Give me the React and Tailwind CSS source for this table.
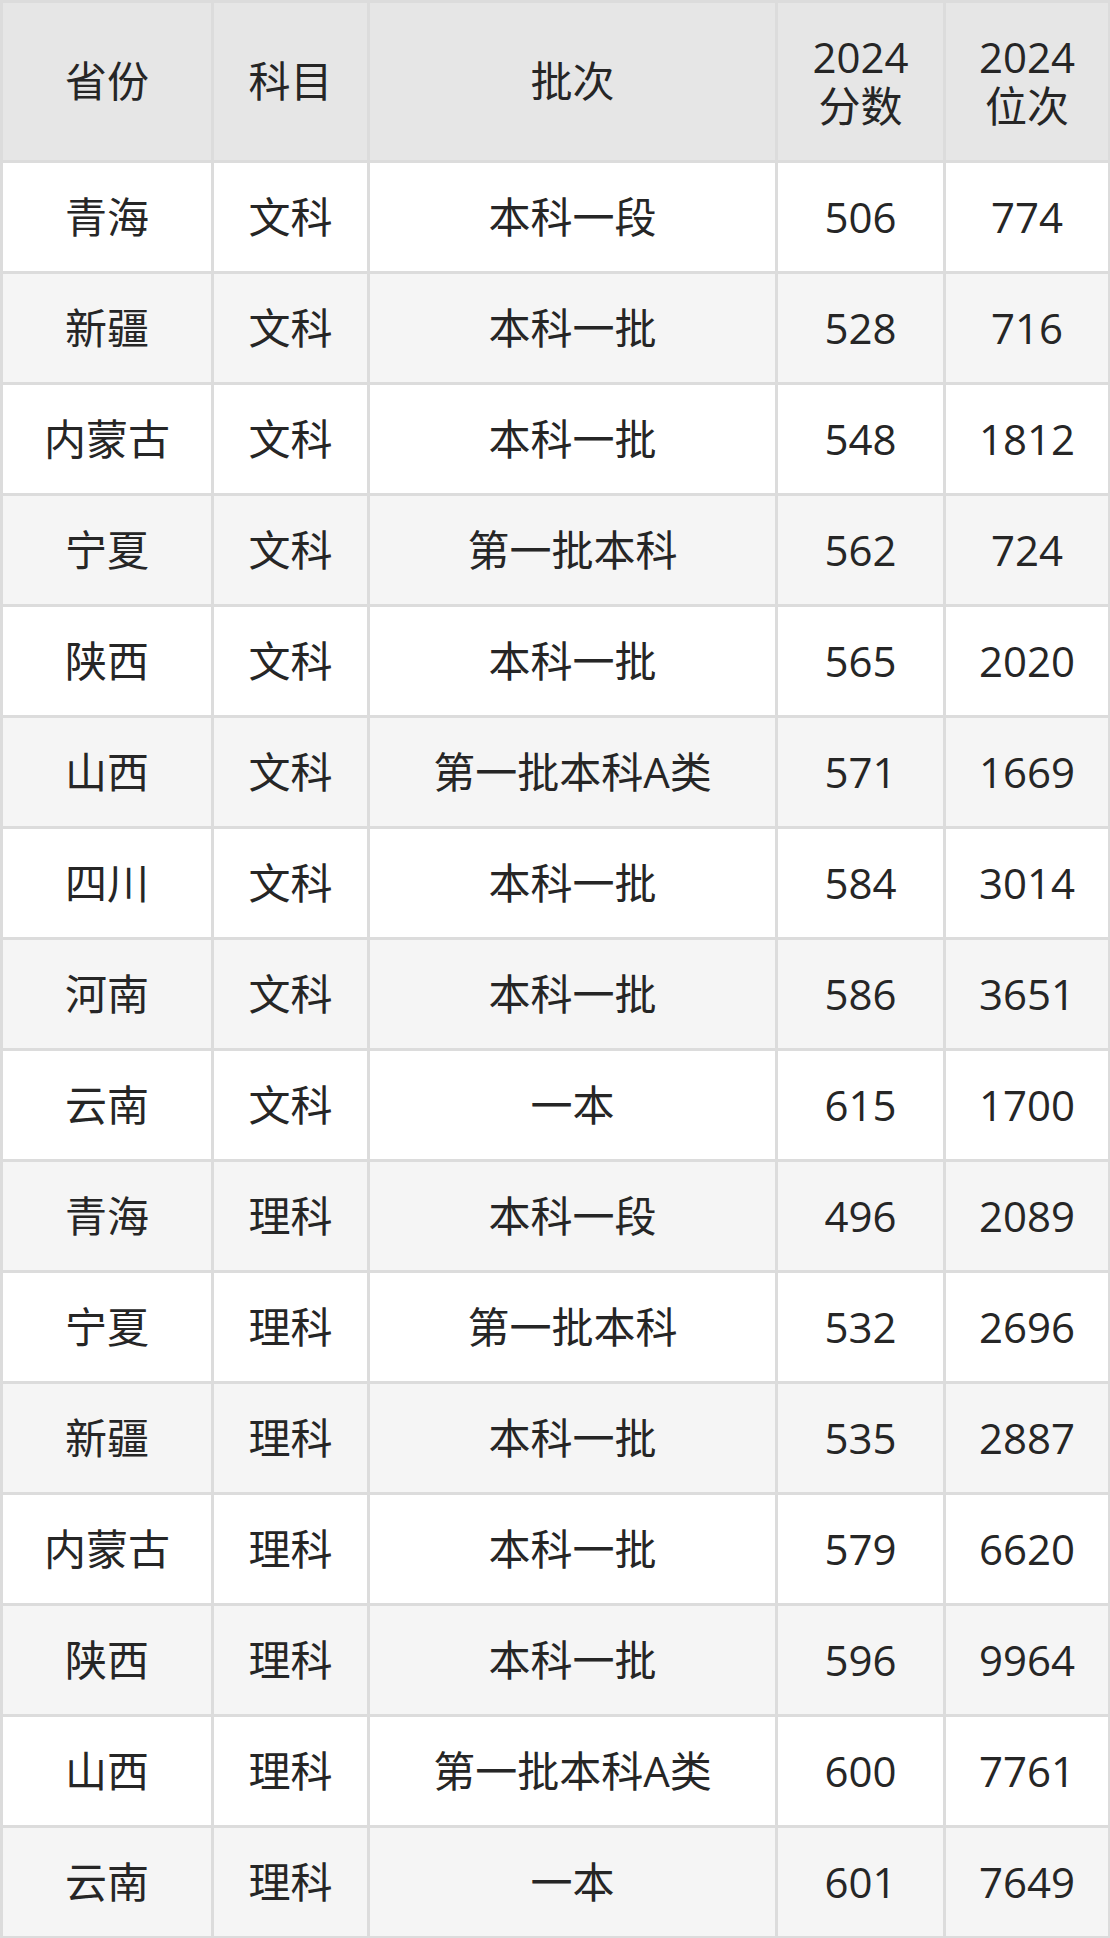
import React from "react";

const rows = [
  ["青海", "文科", "本科一段", "506", "774"],
  ["新疆", "文科", "本科一批", "528", "716"],
  ["内蒙古", "文科", "本科一批", "548", "1812"],
  ["宁夏", "文科", "第一批本科", "562", "724"],
  ["陕西", "文科", "本科一批", "565", "2020"],
  ["山西", "文科", "第一批本科A类", "571", "1669"],
  ["四川", "文科", "本科一批", "584", "3014"],
  ["河南", "文科", "本科一批", "586", "3651"],
  ["云南", "文科", "一本", "615", "1700"],
  ["青海", "理科", "本科一段", "496", "2089"],
  ["宁夏", "理科", "第一批本科", "532", "2696"],
  ["新疆", "理科", "本科一批", "535", "2887"],
  ["内蒙古", "理科", "本科一批", "579", "6620"],
  ["陕西", "理科", "本科一批", "596", "9964"],
  ["山西", "理科", "第一批本科A类", "600", "7761"],
  ["云南", "理科", "一本", "601", "7649"],
];

const cell = "border-[3px] border-[#dcdcdc] text-center align-middle";

const App = () => {
  return (
    <div
      className="w-[1110px] bg-white text-[#262626] text-[42px] leading-[1.05]"
      style={{ fontFamily: '"Open Sans", "Noto Sans CJK SC", sans-serif' }}
    >
      <table className="w-[1108px] table-fixed border-collapse">
        <colgroup>
          <col className="w-[211px]" />
          <col className="w-[156px]" />
          <col className="w-[408px]" />
          <col className="w-[168px]" />
          <col className="w-[165px]" />
        </colgroup>
        <thead>
          <tr className="h-[160px] bg-[#e6e6e6] leading-[1.15]">
            <th className={`${cell} font-normal`}>省份</th>
            <th className={`${cell} font-normal`}>科目</th>
            <th className={`${cell} font-normal`}>批次</th>
            <th className={`${cell} font-normal`}>
              <div>2024</div>
              <div>分数</div>
            </th>
            <th className={`${cell} font-normal`}>
              <div>2024</div>
              <div>位次</div>
            </th>
          </tr>
        </thead>
        <tbody>
          {rows.map((r, i) => (
            <tr key={i} className={`h-[111px] ${i % 2 === 1 ? "bg-[#f5f5f5]" : "bg-white"}`}>
              {r.map((v, j) => (
                <td key={j} className={cell}>
                  {v}
                </td>
              ))}
            </tr>
          ))}
        </tbody>
      </table>
    </div>
  );
};

export default App;
